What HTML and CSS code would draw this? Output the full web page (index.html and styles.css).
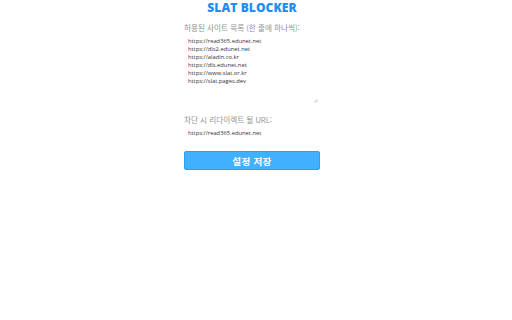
FILE: index.html
```html
<!DOCTYPE html>
<html lang="ko">
<head>
<meta charset="utf-8">
<title>SLAT BLOCKER</title>
<link rel="stylesheet" href="styles.css">
</head>
<body>
<div class="page">
  <main class="panel">
    <h1 class="title">SLAT BLOCKER</h1>
    <label class="label" for="sites">허용된 사이트 목록 (한 줄에 하나씩):</label>
    <div class="sites-wrap">
      <textarea id="sites" class="sites">https://read365.edunet.net
https://dls2.edunet.net
https://aladin.co.kr
https://dls.edunet.net
https://www.slat.or.kr
https://slat.pages.dev</textarea>
      <svg class="grip" width="5" height="5" viewBox="0 0 5 5" aria-hidden="true">
        <path d="M4.5 1 L1 4.5 M4.5 3 L3 4.5" stroke="#9a9a9a" stroke-width="0.6" fill="none"/>
      </svg>
    </div>
    <label class="label label-2" for="redirect">차단 시 리다이렉트 될 URL:</label>
    <input id="redirect" class="url" type="text" value="https://read365.edunet.net">
    <button class="save" type="button">설정 저장</button>
  </main>
</div>
</body>
</html>
```

FILE: styles.css
```css
html, body {
  margin: 0;
  padding: 0;
  background: #ffffff;
}
.page {
  display: flex;
  justify-content: center;
  padding-right: 8px;
}
.panel {
  width: 136px;
  display: flex;
  flex-direction: column;
  font-family: "Noto Sans CJK KR", "Noto Sans", sans-serif;
}
.title {
  margin: 0;
  padding-top: 1px;
  padding-bottom: 2px;
  height: 13px;
  text-align: center;
  font-family: "Open Sans", "DejaVu Sans", sans-serif;
  font-weight: 800;
  font-size: 12px;
  line-height: 13px;
  color: #1e8df5;
  letter-spacing: 0.1px;
}
.label {
  font-size: 7.6px;
  line-height: 8px;
  font-weight: 400;
  color: #939393;
  margin-top: 8px;
}
.label-2 {
  margin-top: 12px;
}
.sites-wrap {
  position: relative;
  margin-top: 2px;
  display: flex;
  flex-direction: column;
}
.sites {
  height: 70px;
  border: none;
  outline: none;
  padding: 3px 4px;
  box-sizing: border-box;
  font-family: "Open Sans", "Noto Sans", sans-serif;
  font-size: 5.8px;
  line-height: 8px;
  color: #333;
  resize: none;
  overflow: hidden;
}
.grip {
  position: absolute;
  right: 2px;
  bottom: 1px;
}
.url {
  margin-top: 2px;
  height: 14px;
  border: none;
  outline: none;
  padding: 0 4px;
  box-sizing: border-box;
  font-family: "Open Sans", "Noto Sans", sans-serif;
  font-size: 5.8px;
  color: #333;
}
.save {
  margin-top: 11px;
  height: 19px;
  border: 1px solid #2e9ff0;
  border-radius: 2px;
  background: #40b1ff;
  color: #ffffff;
  font-family: "Noto Sans CJK KR", sans-serif;
  font-weight: 700;
  font-size: 9.6px;
  letter-spacing: 0.3px;
  padding: 0;
}
```
